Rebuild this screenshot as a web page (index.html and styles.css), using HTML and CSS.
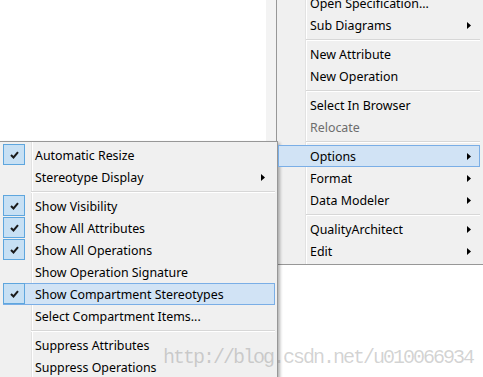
FILE: index.html
```html
<!DOCTYPE html>
<html lang="en">
<head>
    <meta charset="UTF-8">
    <title>Context Menu</title>
    <link rel="stylesheet" href="styles.css">
</head>
<body>
    <div class="stage">
        <div class="strip"></div>

        <div class="menu menu-main">
            <div class="item">Open Specification...</div>
            <div class="item">Sub Diagrams<svg class="arrow" width="4" height="7" viewBox="0 0 4 7"><polygon points="0,0 4,3.5 0,7"/></svg></div>
            <div class="sep"></div>
            <div class="item">New Attribute</div>
            <div class="item">New Operation</div>
            <div class="sep"></div>
            <div class="item">Select In Browser</div>
            <div class="item disabled">Relocate</div>
            <div class="sep"></div>
            <div class="item hot">Options<svg class="arrow" width="4" height="7" viewBox="0 0 4 7"><polygon points="0,0 4,3.5 0,7"/></svg></div>
            <div class="item">Format<svg class="arrow" width="4" height="7" viewBox="0 0 4 7"><polygon points="0,0 4,3.5 0,7"/></svg></div>
            <div class="item">Data Modeler<svg class="arrow" width="4" height="7" viewBox="0 0 4 7"><polygon points="0,0 4,3.5 0,7"/></svg></div>
            <div class="sep"></div>
            <div class="item">QualityArchitect<svg class="arrow" width="4" height="7" viewBox="0 0 4 7"><polygon points="0,0 4,3.5 0,7"/></svg></div>
            <div class="item">Edit<svg class="arrow" width="4" height="7" viewBox="0 0 4 7"><polygon points="0,0 4,3.5 0,7"/></svg></div>
        </div>

        <div class="menu menu-options">
            <div class="item"><span class="check"><svg width="9" height="8" viewBox="0 0 9 8"><path d="M1 4 L3.5 6.5 L8 1.2"/></svg></span>Automatic Resize</div>
            <div class="item">Stereotype Display<svg class="arrow" width="4" height="7" viewBox="0 0 4 7"><polygon points="0,0 4,3.5 0,7"/></svg></div>
            <div class="sep"></div>
            <div class="item"><span class="check"><svg width="9" height="8" viewBox="0 0 9 8"><path d="M1 4 L3.5 6.5 L8 1.2"/></svg></span>Show Visibility</div>
            <div class="item"><span class="check"><svg width="9" height="8" viewBox="0 0 9 8"><path d="M1 4 L3.5 6.5 L8 1.2"/></svg></span>Show All Attributes</div>
            <div class="item"><span class="check"><svg width="9" height="8" viewBox="0 0 9 8"><path d="M1 4 L3.5 6.5 L8 1.2"/></svg></span>Show All Operations</div>
            <div class="item">Show Operation Signature</div>
            <div class="item hot"><span class="check"><svg width="9" height="8" viewBox="0 0 9 8"><path d="M1 4 L3.5 6.5 L8 1.2"/></svg></span>Show Compartment Stereotypes</div>
            <div class="item">Select Compartment Items...</div>
            <div class="sep"></div>
            <div class="item">Suppress Attributes</div>
            <div class="item">Suppress Operations</div>
        </div>

        <div class="watermark">http://blog.csdn.net/u010066934</div>
    </div>
</body>
</html>
```

FILE: styles.css
```css
body {
    margin: 0;
    background: #fff;
    font-family: 'Noto Sans', 'Segoe UI', sans-serif;
    font-size: 12.4px;
    color: #000;
}
.stage {
    position: relative;
    width: 483px;
    height: 377px;
    overflow: hidden;
}
.strip {
    position: absolute;
    left: 266px;
    top: 0;
    width: 10px;
    height: 141px;
    background: #f3f3f3;
}
.menu {
    position: absolute;
    background: #f0f0f0;
    border: 1px solid #979797;
    padding: 2px;
}
.menu::before {
    content: "";
    position: absolute;
    top: 0;
    bottom: 0;
    width: 1px;
    background: #e2e2e2;
    box-shadow: 1px 0 0 #fff;
}
.menu-main {
    left: 276px;
    top: -11px;
    width: 202px;
    padding: 2px 3px 2px 1px;
}
.menu-main::before {
    left: 28px;
}
.menu-options {
    left: -1px;
    top: 141px;
    width: 272px;
    padding: 2px 2px 2px 3px;
    box-shadow: 2px 2px 3px rgba(0,0,0,0.3);
}
.menu-options::before {
    left: 31px;
}
.item {
    position: relative;
    display: flex;
    align-items: center;
    height: 22px;
    padding-left: 32px;
    white-space: nowrap;
}
.item.disabled {
    color: #6d6d6d;
}
.item.hot {
    background: #d1e3f5;
    box-shadow: inset 0 0 0 1px #7aaee6;
    z-index: 1;
}
.arrow {
    margin-left: auto;
    margin-right: 9px;
    fill: #000;
}
.menu-options .arrow {
    margin-right: 10px;
}
.check {
    position: absolute;
    left: 0;
    top: 0;
    width: 22px;
    height: 21px;
    box-sizing: border-box;
    border: 1px solid #5ea6de;
    background: #c7e0f4;
    display: flex;
    align-items: center;
    justify-content: center;
}
.check path {
    fill: none;
    stroke: #1a1a1a;
    stroke-width: 2;
}
.sep {
    position: relative;
    height: 7px;
    margin-left: 28px;
}
.sep::after {
    content: "";
    position: absolute;
    left: 0;
    right: 0;
    top: 3px;
    height: 1px;
    background: #d7d7d7;
    box-shadow: 0 1px 0 #fff;
}
.watermark {
    position: absolute;
    left: 163px;
    top: 348px;
    font-family: 'Liberation Mono', monospace;
    font-size: 20px;
    line-height: 20px;
    letter-spacing: -2px;
    color: rgba(128,128,128,0.35);
    white-space: nowrap;
}
```
